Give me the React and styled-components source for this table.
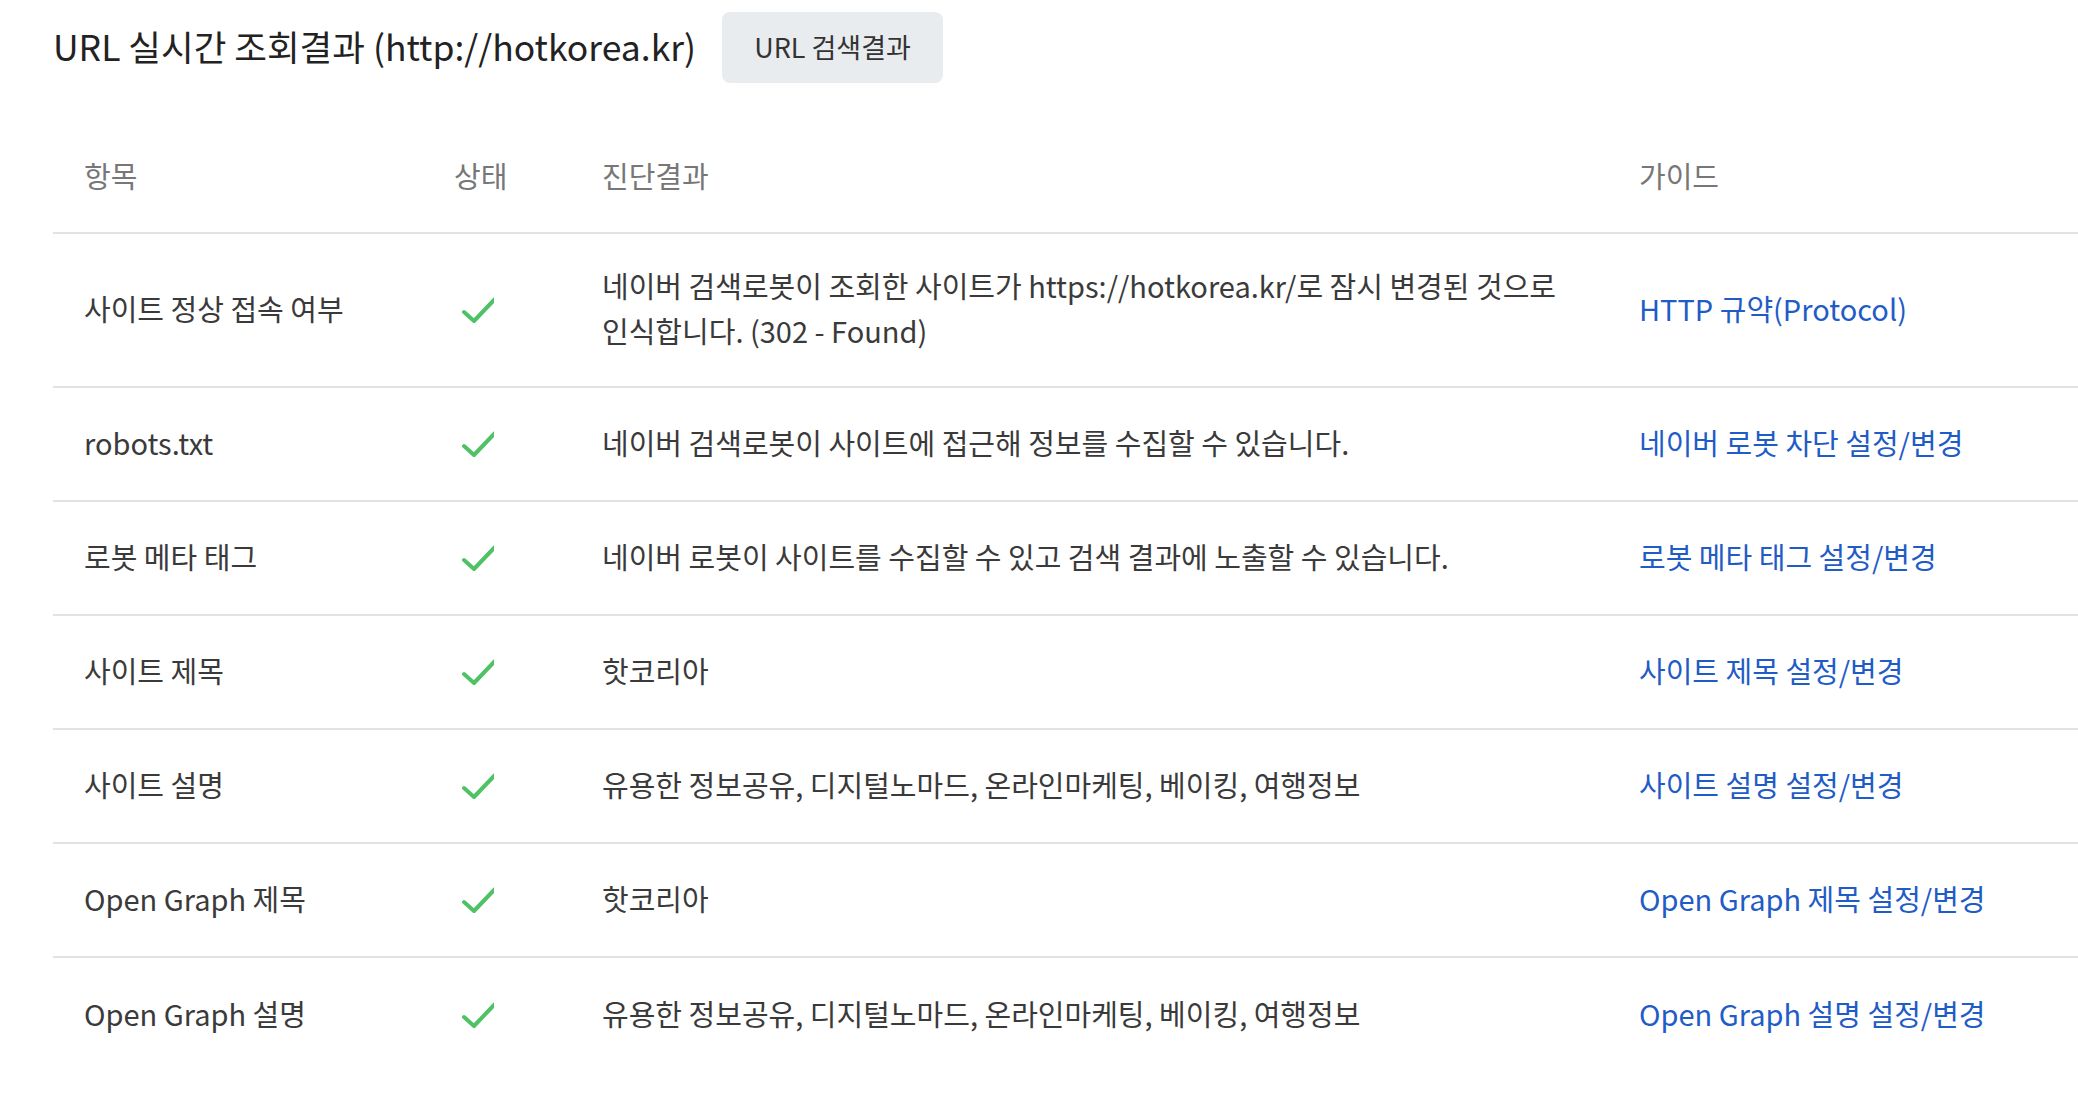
import React from 'react';
import styled, { createGlobalStyle } from 'styled-components';

const GlobalStyle = createGlobalStyle`
  html, body {
    margin: 0;
    padding: 0;
    background: #fff;
  }
  body {
    font-family: "Noto Sans CJK KR", "Noto Sans", sans-serif;
    color: #333;
    overflow: hidden;
  }
`;

const Page = styled.div`
  padding: 12px 0 0 53px;
`;

const TitleBar = styled.div`
  display: flex;
  align-items: center;
  gap: 26px;
  height: 71px;
`;

const Title = styled.h2`
  margin: 0;
  padding-bottom: 4px;
  font-size: 35.5px;
  font-weight: 400;
  color: #222;
`;

const SearchButton = styled.button`
  width: 221px;
  height: 71px;
  border: none;
  border-radius: 8px;
  background: #e9ecef;
  color: #333;
  font-family: inherit;
  font-size: 27px;
  padding-bottom: 3px;
  cursor: pointer;
`;

const Table = styled.div`
  margin-top: 35px;
`;

const Row = styled.div`
  display: grid;
  grid-template-columns: 370px 148px 1037px 1fr;
  align-items: center;
  box-sizing: border-box;
  min-height: ${(p) => (p.$head ? '116px' : '114px')};
  padding: ${(p) => (p.$head ? '0' : '29px 0')};
  border-bottom: ${(p) => (p.$last ? 'none' : '2px solid #e2e2e2')};
`;

const Cell = styled.div`
  padding: 0 31px ${(p) => (p.$head ? '0' : '4px')};
  font-size: 29px;
  line-height: 45px;
  color: ${(p) => (p.$head ? '#777' : '#3a3a3a')};
  word-break: keep-all;
`;

const GuideLink = styled.a`
  color: #1f5cc6;
  text-decoration: none;
  white-space: nowrap;
`;

const CheckIcon = () => (
  <svg width="40" height="32" viewBox="0 0 40 32" style={{ display: 'block' }}>
    <polyline
      points="10,20 20,29 41,7"
      fill="none"
      stroke="#4fc266"
      strokeWidth="4"
      strokeLinecap="round"
      strokeLinejoin="round"
    />
  </svg>
);

const rows = [
  {
    item: '사이트 정상 접속 여부',
    result: '네이버 검색로봇이 조회한 사이트가 https://hotkorea.kr/로 잠시 변경된 것으로 인식합니다. (302 - Found)',
    guide: 'HTTP 규약(Protocol)',
  },
  {
    item: 'robots.txt',
    result: '네이버 검색로봇이 사이트에 접근해 정보를 수집할 수 있습니다.',
    guide: '네이버 로봇 차단 설정/변경',
  },
  {
    item: '로봇 메타 태그',
    result: '네이버 로봇이 사이트를 수집할 수 있고 검색 결과에 노출할 수 있습니다.',
    guide: '로봇 메타 태그 설정/변경',
  },
  { item: '사이트 제목', result: '핫코리아', guide: '사이트 제목 설정/변경' },
  {
    item: '사이트 설명',
    result: '유용한 정보공유, 디지털노마드, 온라인마케팅, 베이킹, 여행정보',
    guide: '사이트 설명 설정/변경',
  },
  { item: 'Open Graph 제목', result: '핫코리아', guide: 'Open Graph 제목 설정/변경' },
  {
    item: 'Open Graph 설명',
    result: '유용한 정보공유, 디지털노마드, 온라인마케팅, 베이킹, 여행정보',
    guide: 'Open Graph 설명 설정/변경',
  },
];

export default function App() {
  return (
    <>
      <GlobalStyle />
      <Page>
        <TitleBar>
          <Title>URL 실시간 조회결과 (http://hotkorea.kr)</Title>
          <SearchButton>URL 검색결과</SearchButton>
        </TitleBar>
        <Table>
          <Row $head>
            <Cell $head>항목</Cell>
            <Cell $head>상태</Cell>
            <Cell $head>진단결과</Cell>
            <Cell $head>가이드</Cell>
          </Row>
          {rows.map((r, i) => (
            <Row key={r.item} $last={i === rows.length - 1}>
              <Cell>{r.item}</Cell>
              <Cell>
                <CheckIcon />
              </Cell>
              <Cell>{r.result}</Cell>
              <Cell>
                <GuideLink href="#">{r.guide}</GuideLink>
              </Cell>
            </Row>
          ))}
        </Table>
      </Page>
    </>
  );
}
